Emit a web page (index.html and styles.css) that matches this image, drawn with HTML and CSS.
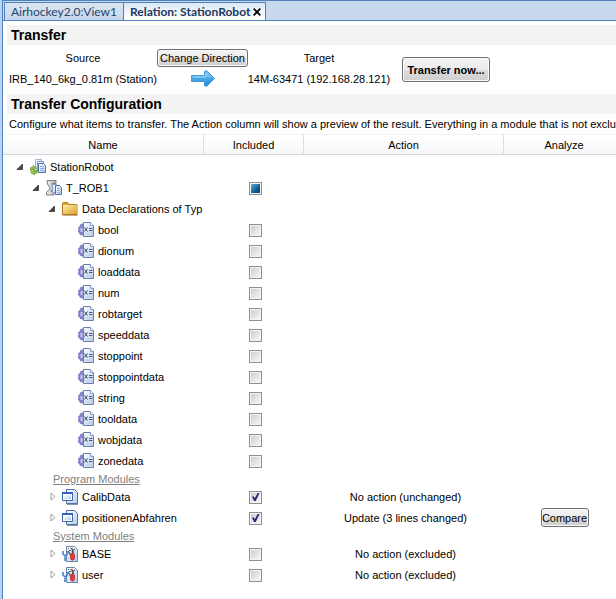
FILE: index.html
```html
<!DOCTYPE html>
<html lang="en">
<head>
<meta charset="utf-8">
<title>Relation: StationRobot</title>
<link rel="stylesheet" href="styles.css">
</head>
<body>
<svg class="defs" aria-hidden="true">
  <defs>
    <linearGradient id="g-page" x1="0" y1="0" x2="1" y2="1"><stop offset="0" stop-color="#ffffff"/><stop offset="1" stop-color="#b4cdea"/></linearGradient>
    <linearGradient id="g-folder" x1="0" y1="0" x2="1" y2="1"><stop offset="0" stop-color="#fff0a8"/><stop offset="1" stop-color="#dc9d2b"/></linearGradient>
    <linearGradient id="g-arrow" x1="0" y1="0" x2="0" y2="1"><stop offset="0" stop-color="#79c8f5"/><stop offset="1" stop-color="#1c86d6"/></linearGradient>
    <linearGradient id="g-robot" x1="0" y1="0" x2="1" y2="0"><stop offset="0" stop-color="#f4f4f4"/><stop offset="1" stop-color="#a9a9a9"/></linearGradient>
    <symbol id="pages" viewBox="0 0 16 16">
      <path d="M5.500 .5h6v9h-6z" fill="url(#g-page)" stroke="#9db6d8"/>
      <path d="M7.500 2.500h6v9h-6z" fill="url(#g-page)" stroke="#7f9fcd"/>
      <path d="M8.500 4.500h5l2 2v7h-7z" fill="url(#g-page)" stroke="#4f74ad"/>
      <path d="M10 7.500h4M10 9.500h4M10 11.500h4" stroke="#8fb0de"/>
    </symbol>
    <symbol id="station" viewBox="0 0 16 16">
      <use href="#pages" width="16" height="16"/>
      <path d="M0 11.500V10q0-2 3-2V6.500L6.500 9 3 11.500V10H2v1.500z" fill="#8dc63f" stroke="#5b8f20" stroke-width=".6"/>
      <path d="M7.500 11V13q0 1.500-3 1.500V16L.5 13.500 4.500 11v1.500h1V11z" fill="#8dc63f" stroke="#5b8f20" stroke-width=".6"/>
    </symbol>
    <symbol id="task" viewBox="0 0 16 16">
      <path d="M1 .5h9v3H6l1 5-2 3h3v3.500H.5V12l2-1.500L4 8 1.500 4z" fill="url(#g-robot)" stroke="#808080"/>
      <path d="M6.500 4.500h4l1 1v7h-5z" fill="url(#g-page)" stroke="#7f9fcd"/>
      <path d="M9.500 5.500h4l2 2v7h-6z" fill="url(#g-page)" stroke="#4f74ad"/>
      <path d="M11 8.500h3M11 10.500h3M11 12.500h3" stroke="#8fb0de"/>
    </symbol>
    <symbol id="folder" viewBox="0 0 16 16">
      <path d="M.5 13.500V2.500q0-1 1-1h4l1.500 2h8v10z" fill="#d9a640" stroke="#b67b22"/>
      <path d="M1 4h14v9.500H1z" fill="url(#g-folder)"/>
      <path d="M.5 14h15" stroke="#8f601c"/>
    </symbol>
    <symbol id="data" viewBox="0 0 16 16">
      <path d="M1 5l1-.5.5-2L4 2l3-.5v12L4 13l-2-.5-.5-2L0 10V8.500l1-1L0 6z" fill="#8583cf" stroke="#6f6dba" stroke-width=".6"/>
      <path d="M2.500 6h2v4h-2z" fill="#c9c8f0"/>
      <path d="M5.500 .5h7l3 3v11h-10z" fill="url(#g-page)" stroke="#6b80ab"/>
      <path d="M12.500 .5v3h3" fill="#fff" stroke="#8fa4c8"/>
      <path d="M6.500 5.500l3 4M9.500 5.500l-3 4" stroke="#36466c"/>
      <path d="M11 6.500h3.500M11 8.500h3.500" stroke="#4d5d84"/>
      <path d="M7 12h7" stroke="#bccfe8"/>
    </symbol>
    <symbol id="module" viewBox="0 0 16 16">
      <path d="M4.500 .5h8l3 3v11h-11z" fill="url(#g-page)" stroke="#53719f"/>
      <path d="M5 15.500h11" stroke="#8197b8"/>
      <path d="M.5 3.500h10v8H.5z" fill="#fff" stroke="#3e67ae"/>
      <path d="M2 6h7v4H2z" fill="url(#g-page)"/>
      <path d="M0 4h11" stroke="#3563b5" stroke-width="2"/>
    </symbol>
    <symbol id="system" viewBox="0 0 16 16">
      <path d="M4.500 .5h8l3 3v12h-11z" fill="url(#g-page)" stroke="#6b85ad"/>
      <path d="M6 2.500h1M8.500 2.500h2M12 3.500h1M7 4.500h2" stroke="#555"/>
      <path d="M1 5v3l2 2 2-1.500V5M3 9.500V15" fill="none" stroke="#4a80ca" stroke-width="1.600"/>
      <path d="M6 5l4 6" stroke="#61718a" stroke-width="1.500"/>
      <path d="M9.500 3h2l.5 4h-2z" fill="#555"/>
      <path d="M8.500 8q2-2 4 0v5q-2 2.500-4 0z" fill="#e33a35" stroke="#b02424" stroke-width=".6"/>
    </symbol>
    <symbol id="open" viewBox="0 0 7 7"><path d="M6.500 1v5.500H1z" fill="#484848" stroke="#222" stroke-width=".7"/></symbol>
    <symbol id="closed" viewBox="0 0 6 9"><path d="M1 1v7l4-3.500z" fill="#fff" stroke="#a0a0a0"/></symbol>
  </defs>
</svg>

<div class="window">
  <nav class="tabs">
    <a class="tab" href="#view">Airhockey2.0:View1</a>
    <div class="tab active"><a href="#relation">Relation: StationRobot</a>
      <button class="close" aria-label="Close"><svg viewBox="0 0 8 8"><path d="M.7.7l6.600 6.600M7.300.7L.7 7.300" stroke="#000" stroke-width="1.700"/></svg></button>
    </div>
  </nav>
  <main id="relation">
    <h2>Transfer</h2>
    <section class="transfer">
      <div class="route">
        <span>Source</span>
        <button class="change">Change Direction</button>
        <span>Target</span>
        <span>IRB_140_6kg_0.81m (Station)</span>
        <svg class="arrow" viewBox="0 0 24 17" aria-hidden="true"><path d="M.5 5.500h13v-4l2-1 8 8-8 8-2-1v-4H.5z" fill="url(#g-arrow)" stroke="#4a9bd4"/><path d="M2 7h13V3.500l4 4" fill="none" stroke="#a9defa"/></svg>
        <span>14M-63471 (192.168.28.121)</span>
      </div>
      <button class="now">Transfer now...</button>
    </section>
    <h2>Transfer Configuration</h2>
    <p class="hint">Configure what items to transfer. The Action column will show a preview of the result. Everything in a module that is not exclu</p>
    <table>
      <colgroup><col class="c-name"><col class="c-included"><col class="c-action"><col class="c-analyze"></colgroup>
      <thead><tr><th>Name</th><th>Included</th><th>Action</th><th>Analyze</th></tr></thead>
      <tbody id="rows">
        <tr><td><div class="node l0"><svg class="open"><use href="#open"/></svg><svg class="icon"><use href="#station"/></svg>StationRobot</div></td><td></td><td></td><td></td></tr>
        <tr><td><div class="node l1"><svg class="open"><use href="#open"/></svg><svg class="icon"><use href="#task"/></svg><label for="trob">T_ROB1</label></div></td><td><input id="trob" class="mixed" type="checkbox" aria-checked="mixed"></td><td></td><td></td></tr>
        <tr><td><div class="node l2"><svg class="open"><use href="#open"/></svg><svg class="icon"><use href="#folder"/></svg>Data Declarations of Typ</div></td><td></td><td></td><td></td></tr>
        <tr><td><div class="node leaf"><svg class="icon"><use href="#data"/></svg><label for="bool">bool</label></div></td><td><input id="bool" type="checkbox"></td><td></td><td></td></tr>
        <tr><td><div class="node leaf"><svg class="icon"><use href="#data"/></svg><label for="dionum">dionum</label></div></td><td><input id="dionum" type="checkbox"></td><td></td><td></td></tr>
        <tr><td><div class="node leaf"><svg class="icon"><use href="#data"/></svg><label for="loaddata">loaddata</label></div></td><td><input id="loaddata" type="checkbox"></td><td></td><td></td></tr>
        <tr><td><div class="node leaf"><svg class="icon"><use href="#data"/></svg><label for="num">num</label></div></td><td><input id="num" type="checkbox"></td><td></td><td></td></tr>
        <tr><td><div class="node leaf"><svg class="icon"><use href="#data"/></svg><label for="robtarget">robtarget</label></div></td><td><input id="robtarget" type="checkbox"></td><td></td><td></td></tr>
        <tr><td><div class="node leaf"><svg class="icon"><use href="#data"/></svg><label for="speeddata">speeddata</label></div></td><td><input id="speeddata" type="checkbox"></td><td></td><td></td></tr>
        <tr><td><div class="node leaf"><svg class="icon"><use href="#data"/></svg><label for="stoppoint">stoppoint</label></div></td><td><input id="stoppoint" type="checkbox"></td><td></td><td></td></tr>
        <tr><td><div class="node leaf"><svg class="icon"><use href="#data"/></svg><label for="stoppointdata">stoppointdata</label></div></td><td><input id="stoppointdata" type="checkbox"></td><td></td><td></td></tr>
        <tr><td><div class="node leaf"><svg class="icon"><use href="#data"/></svg><label for="string">string</label></div></td><td><input id="string" type="checkbox"></td><td></td><td></td></tr>
        <tr><td><div class="node leaf"><svg class="icon"><use href="#data"/></svg><label for="tooldata">tooldata</label></div></td><td><input id="tooldata" type="checkbox"></td><td></td><td></td></tr>
        <tr><td><div class="node leaf"><svg class="icon"><use href="#data"/></svg><label for="wobjdata">wobjdata</label></div></td><td><input id="wobjdata" type="checkbox"></td><td></td><td></td></tr>
        <tr><td><div class="node leaf"><svg class="icon"><use href="#data"/></svg><label for="zonedata">zonedata</label></div></td><td><input id="zonedata" type="checkbox"></td><td></td><td></td></tr>
        <tr class="group"><td colspan="4">Program Modules</td></tr>
        <tr><td><div class="node mod"><svg class="closed"><use href="#closed"/></svg><svg class="icon"><use href="#module"/></svg><label for="calib">CalibData</label></div></td><td><input id="calib" type="checkbox" checked></td><td>No action (unchanged)</td><td></td></tr>
        <tr><td><div class="node mod"><svg class="closed"><use href="#closed"/></svg><svg class="icon"><use href="#module"/></svg><label for="pos">positionenAbfahren</label></div></td><td><input id="pos" type="checkbox" checked></td><td>Update (3 lines changed)</td><td><button class="compare">Compare</button></td></tr>
        <tr class="group"><td colspan="4">System Modules</td></tr>
        <tr><td><div class="node mod"><svg class="closed"><use href="#closed"/></svg><svg class="icon"><use href="#system"/></svg><label for="base">BASE</label></div></td><td><input id="base" type="checkbox"></td><td>No action (excluded)</td><td></td></tr>
        <tr><td><div class="node mod"><svg class="closed"><use href="#closed"/></svg><svg class="icon"><use href="#system"/></svg><label for="user">user</label></div></td><td><input id="user" type="checkbox"></td><td>No action (excluded)</td><td></td></tr>
      </tbody>
    </table>
  </main>
</div>
</body>
</html>
```

FILE: styles.css
```css
* { box-sizing: border-box; }
body {
  margin: 0;
  background: #b9d3f3;
  color: #000;
  font: 11px/14px "Liberation Sans", Arial, sans-serif;
  overflow: hidden;
}
.defs { position: absolute; width: 0; height: 0; }
svg { display: block; flex: none; }
button { font: inherit; color: inherit; padding: 0; }
.window {
  min-height: 100vh;
  margin-left: 2px;
  border-left: 1px solid #4f81bd;
  border-top: 1px solid #4f81bd;
  background: #fff;
}
.tabs {
  display: flex;
  align-items: flex-end;
  height: 20px;
  padding-left: 1px;
  background: #c8d9ee;
  border-bottom: 1px solid #4f81bd;
  font: 12px/16px Lato, "Open Sans", sans-serif;
  white-space: nowrap;
}
.tab {
  display: flex;
  align-items: center;
  justify-content: space-between;
  min-width: 119px;
  height: 18px;
  padding: 0 6px;
  border: 1px solid #4f81bd;
  border-bottom: 0;
  border-right: 0;
  background: linear-gradient(#dbe5f0, #c6d7ea);
  color: #26466d;
  text-decoration: none;
}
.tab.active {
  min-width: 143px;
  padding: 0 4px 0 6px;
  border-right: 1px solid #4f81bd;
  background: linear-gradient(#dce9f8, #fff);
  color: #1e395b;
  font-weight: 700;
}
.tab a { color: inherit; text-decoration: none; }
.close { width: 8px; height: 8px; border: 0; background: none; }
.close svg { width: 8px; height: 8px; }
h2 {
  margin: 0 0 0 4px;
  padding-left: 4px;
  height: 20px;
  background: #f3f3f3;
  font-size: 14px;
  font-weight: 700;
  line-height: 20px;
}
main { padding-top: 4px; }
.transfer {
  display: flex;
  align-items: center;
  gap: 12px;
  height: 49px;
  padding-left: 6px;
}
.route {
  display: grid;
  grid-template-columns: 148px 91px 142px;
  grid-template-rows: 21px 21px;
  align-items: center;
  justify-items: center;
  align-self: flex-start;
  padding-top: 2px;
  white-space: nowrap;
}
.change, .now, .compare {
  border: 1px solid #707070;
  border-radius: 3px;
  background: linear-gradient(#f4f4f4, #ebebeb 50%, #dcdcdc 50%, #cfcfcf);
  box-shadow: inset 0 0 0 1px #fbfbfb;
  white-space: nowrap;
}
.change { width: 91px; height: 18px; }
.now { width: 88px; height: 25px; font-weight: 700; }
.compare { display: block; width: 48px; height: 19px; margin: 0 auto; }
.arrow { width: 24px; height: 17px; }
.hint { margin: 0; padding: 3px 0 3px 6px; white-space: nowrap; }
table { table-layout: fixed; width: 100%; min-width: 622px; border-collapse: separate; border-spacing: 0; }
.c-name { width: 201px; }
.c-action { width: 200px; }
.c-included { width: 100px; }
th {
  height: 21px;
  padding: 0;
  border-top: 1px solid #f2f2f2;
  border-right: 1px solid #dcdfe2;
  border-bottom: 1px solid #d5d5d5;
  background: linear-gradient(#fff, #f6f7f9);
  font-weight: 400;
}
tbody::before { content: ""; display: table-row; height: 1px; }
td { height: 21px; padding: 0; text-align: center; white-space: nowrap; }
td:nth-child(2) { padding: 1px 0 0 3px; }
td:nth-child(3) { padding-left: 3px; }
.node { display: flex; align-items: center; gap: 4px; height: 21px; }
.l0 { padding-left: 13px; }
.l1 { padding-left: 29px; }
.l2 { padding-left: 45px; }
.leaf { padding-left: 75px; }
.mod { padding-left: 47px; }
.open { width: 7px; height: 7px; }
.closed { width: 6px; height: 9px; }
.icon { width: 16px; height: 16px; }
.open + .icon { margin-left: 3px; }
.closed + .icon { margin-left: 2px; }
.group td { height: 15px; padding: 1px 0 0 50px; line-height: 14px; text-align: left; color: #808080; text-decoration: underline; }
input {
  appearance: none;
  display: block;
  width: 13px;
  height: 13px;
  margin: 0 auto;
  border: 1px solid #8e8f8f;
  background: linear-gradient(135deg, #cbcfd5, #f6f6f6) content-box;
  padding: 1px;
  box-shadow: inset 0 0 0 1px #f4f4f4;
}
input.mixed { background: linear-gradient(135deg, #4fb8e0, #145c94 60%, #0f3e6c) content-box; }
input:checked::before {
  content: "";
  display: block;
  width: 9px;
  height: 9px;
  background: #25266f;
  clip-path: polygon(10% 45%, 30% 45%, 42% 65%, 75% 5%, 95% 5%, 52% 95%, 35% 95%);
}
```
